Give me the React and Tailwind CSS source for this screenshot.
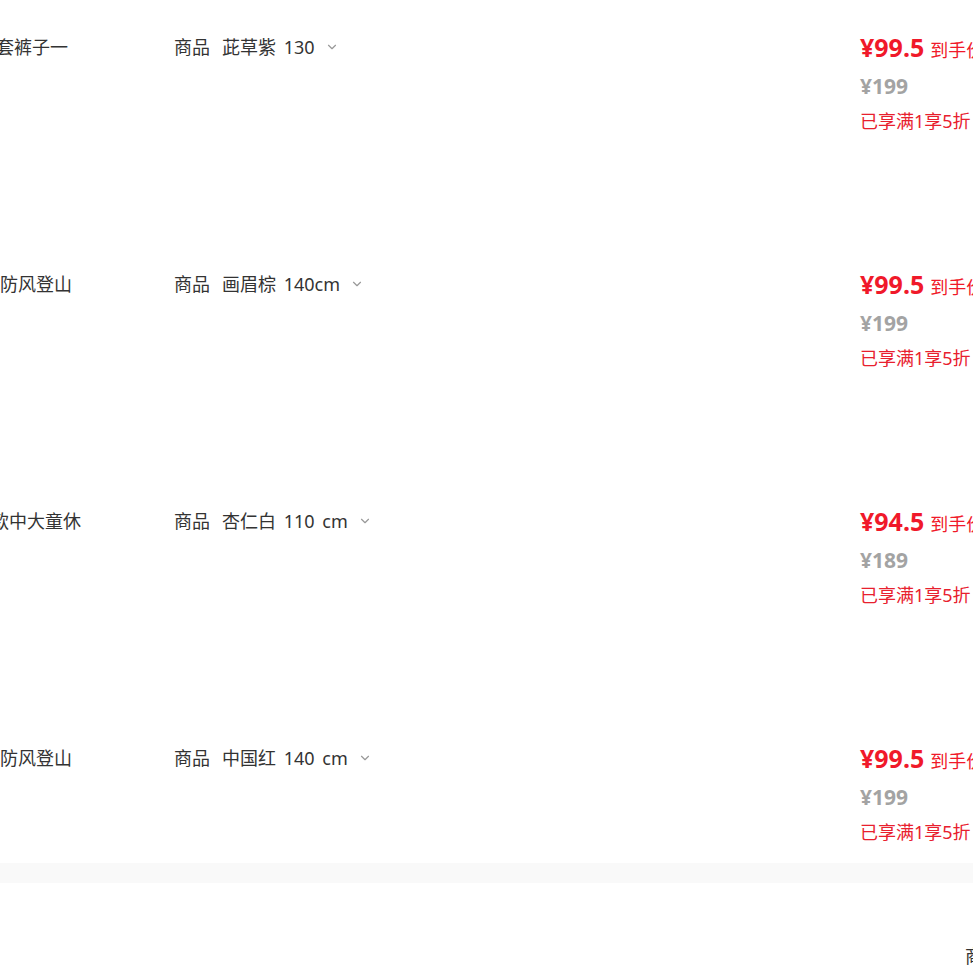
import { ChevronDown } from 'lucide-react';

const ROWS = [
  { title: '套裤子一', shift: 'ml-[-4px]', sku: '茈草紫 130', price: '99.5', origin: '199' },
  { title: '防风登山', shift: 'ml-0', sku: '画眉棕 140cm', price: '99.5', origin: '199' },
  { title: '款中大童休', shift: 'ml-[-9px]', sku: '杏仁白 110 cm', price: '94.5', origin: '189' },
  { title: '防风登山', shift: 'ml-0', sku: '中国红 140 cm', price: '99.5', origin: '199' },
];

const FONT = "font-['Noto_Sans','Noto_Sans_CJK_SC',sans-serif]";

export default function App() {
  return (
    <div className={`w-[973px] h-[973px] overflow-hidden bg-white ${FONT}`}>
      <div className="flex flex-col gap-[137px] pt-[34px] pb-[18px]">
        {ROWS.map((r, i) => (
          <div key={i} className="grid grid-cols-[174px_686px_300px] w-[1160px]">
            <div className="overflow-hidden">
              <div className={`${r.shift} whitespace-nowrap text-[18px] leading-[26px] text-[#333]`}>
                {r.title}
              </div>
            </div>
            <div className="flex items-center h-[26px] text-[18px] leading-[26px] text-[#333] whitespace-nowrap">
              <span>商品</span>
              <span className="ml-3 [word-spacing:3px]">{r.sku}</span>
              <ChevronDown className="ml-[10px] w-[14px] h-[14px] text-[#999]" strokeWidth={2} />
            </div>
            <div className="flex flex-col whitespace-nowrap">
              <div className="flex items-baseline h-[26px] leading-[26px] text-[#f0192a]">
                <span className="text-[25px] font-bold">¥{r.price}</span>
                <span className="ml-[6px] text-[18px]">到手价</span>
              </div>
              <div className="mt-[13px] h-[26px] leading-[26px] text-[21px] font-bold text-[#a3a3a3]">¥{r.origin}</div>
              <div className="mt-[9px] h-[26px] leading-[26px] text-[18px] text-[#e8202e]">已享满1享5折</div>
            </div>
          </div>
        ))}
      </div>
      <div className="h-[20px] bg-[#f9f9f9]" />
      <div className="pt-[60px] pl-[965px] whitespace-nowrap text-[18px] leading-[26px] text-[#333]">商品总价</div>
    </div>
  );
}
